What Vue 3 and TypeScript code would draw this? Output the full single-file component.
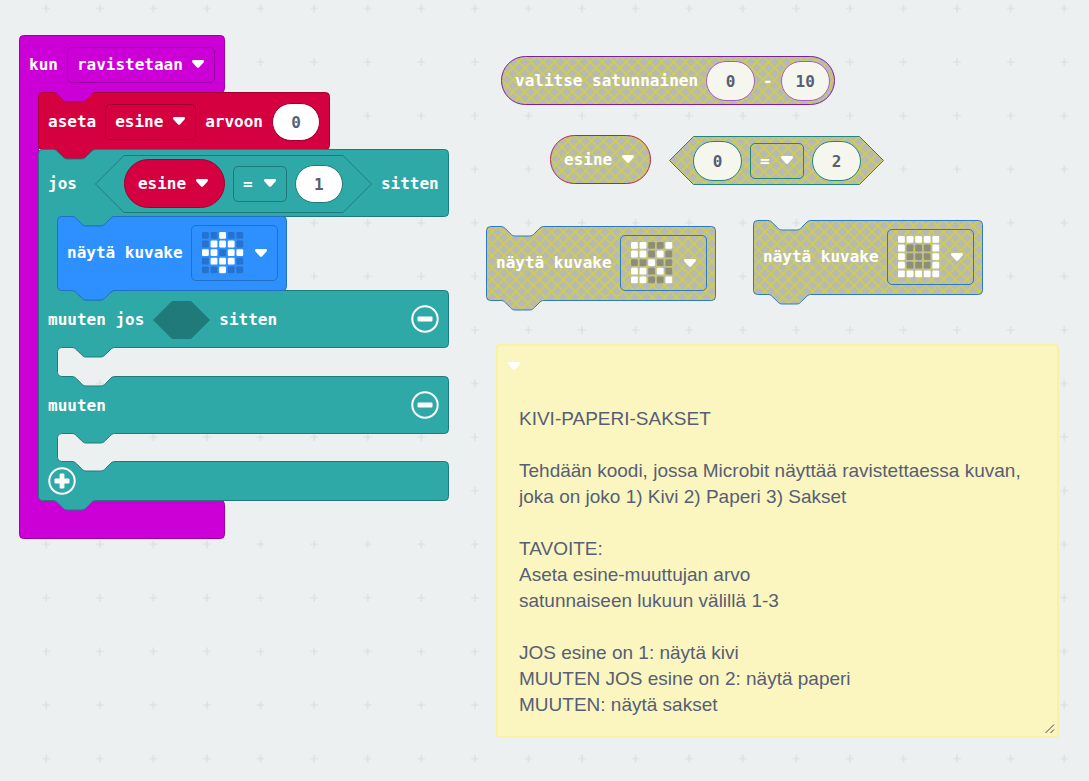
<script setup lang="ts">
import { ref } from 'vue'

const NOTCH = 'c2.4 0 3.6 1.2 4.8 2.4 l4.7 4.7 c1.2 1.2 2.4 2.4 4.8 2.4 h14.4 c2.4 0 3.6 -1.2 4.8 -2.4 l4.7 -4.7 c1.2 -1.2 2.4 -2.4 4.8 -2.4'
const NOTCH_BACK = 'c-2.4 0 -3.6 1.2 -4.8 2.4 l-4.7 4.7 c-1.2 1.2 -2.4 2.4 -4.8 2.4 h-14.4 c-2.4 0 -3.6 -1.2 -4.8 -2.4 l-4.7 -4.7 c-1.2 -1.2 -2.4 -2.4 -4.8 -2.4'
const INDENT = 19

// Right end of an arm, from the top edge down to the bottom edge at y
const armEnd = (right: number, bottom: number) =>
  `H${right - 3.5} a4 4 0 0 1 4 4 V${bottom - 3.5} a4 4 0 0 1 -4 4`

// Open mouth on the left side, between an upper and a lower arm
const mouth = (top: number, bottom: number) =>
  `H${INDENT + 57.9} ${NOTCH_BACK} H${INDENT + 4.5} a4 4 0 0 0 -4 4 V${bottom - 3.5} a4 4 0 0 0 4 4`

const statementPath = (w: number, h: number) =>
  `M.5 4.5 a4 4 0 0 1 4 -4 H14.9 ${NOTCH} ${armEnd(w, h)} H57.9 ${NOTCH_BACK} H4.5 a4 4 0 0 1 -4 -4 z`

const eventPath =
  `M.5 4.5 a4 4 0 0 1 4 -4 ${armEnd(205, 57)} ${mouth(57, 465)} ${armEnd(205, 503)} H4.5 a4 4 0 0 1 -4 -4 z`

const ifPath =
  `M.5 4.5 a4 4 0 0 1 4 -4 H14.9 ${NOTCH} ${armEnd(410, 67)} ${mouth(67, 141)} H33.9 ${NOTCH} ` +
  `${armEnd(410, 198)} ${mouth(198, 227)} H33.9 ${NOTCH} ` +
  `${armEnd(410, 284)} ${mouth(284, 312)} H33.9 ${NOTCH} ` +
  `${armEnd(410, 351)} H57.9 ${NOTCH_BACK} H4.5 a4 4 0 0 1 -4 -4 z`

const pillPath = (w: number, h: number) => {
  const r = h / 2
  return `M${r + 0.5} .5 H${w - r + 0.5} a${r} ${r} 0 0 1 0 ${h} H${r + 0.5} a${r} ${r} 0 0 1 0 ${-h} z`
}

const hexPath = (w: number, h: number) => {
  const r = h / 2
  return `M${r + 0.5} .5 H${w - r + 0.5} l${r} ${r} l${-r} ${r} H${r + 0.5} l${-r} ${-r} z`
}

const ARROW = 'M1.6 0 H10.4 C12 0 12.5 1.5 11.5 2.6 L7.2 7.2 C6.5 8 5.5 8 4.8 7.2 L.5 2.6 C-.5 1.5 0 0 1.6 0 z'

const leds = (rows: string[]) =>
  rows.flatMap((row, y) => [...row].map((c, x) => ({ x: x * 8.6, y: y * 8.6, on: c === '1' })))

const rock = leds(['00100', '01110', '11011', '01110', '00100'])

const spareIcons = [
  { id: 'scissors', name: 'sakset', cells: leds(['11001', '11010', '00100', '11010', '11001']) },
  { id: 'paper', name: 'paperi', cells: leds(['11111', '10001', '10001', '10001', '11111']) },
]

const gesture = ref('ravistetaan')
const variable = ref('esine')
const operator = ref('=')
const assigned = ref('0')
const compared = ref('1')
const randomFrom = ref('0')
const randomTo = ref('10')
const spareLeft = ref('0')
const spareRight = ref('2')

const note = ref(`KIVI-PAPERI-SAKSET

Tehdään koodi, jossa Microbit näyttää ravistettaessa kuvan, joka on joko 1) Kivi 2) Paperi 3) Sakset

TAVOITE:
Aseta esine-muuttujan arvo
satunnaiseen lukuun välillä 1-3

JOS esine on 1: näytä kivi
MUUTEN JOS esine on 2: näytä paperi
MUUTEN: näytä sakset`)
</script>

<template>
  <main class="workspace">
    <svg class="grid" aria-hidden="true">
      <defs>
        <pattern id="dots" x="19.4" y="-18.3" width="53.58" height="53.58" patternUnits="userSpaceOnUse">
          <path d="M22.8 26.8 h8 M26.8 22.8 v8" stroke="#dadddf" stroke-width="1.2" />
        </pattern>
        <pattern id="hatch" width="10" height="10" patternUnits="userSpaceOnUse" patternTransform="scale(1.19)">
          <rect width="10" height="10" fill="#aaa" />
          <path d="M-1 -1 L11 11 M11 -1 L-1 11" stroke="#cc0" stroke-width="1.2" />
        </pattern>
      </defs>
      <rect width="100%" height="100%" fill="url(#dots)" />
    </svg>

    <section class="block event">
      <svg class="shape" aria-hidden="true"><path :d="eventPath" /></svg>
      <div class="row">
        <span>kun</span>
        <span class="field">
          <select v-model="gesture" aria-label="ele"><option>ravistetaan</option></select>
          <svg class="arrow" viewBox="0 0 12 8" aria-hidden="true"><path :d="ARROW" /></svg>
        </span>
      </div>

      <div class="nested">
        <div class="block set">
          <svg class="shape" aria-hidden="true"><path :d="statementPath(291, 57)" /></svg>
          <div class="row">
            <span>aseta</span>
            <span class="field">
              <select v-model="variable" aria-label="muuttuja"><option>esine</option></select>
              <svg class="arrow" viewBox="0 0 12 8" aria-hidden="true"><path :d="ARROW" /></svg>
            </span>
            <span>arvoon</span>
            <input v-model="assigned" class="number" inputmode="numeric" aria-label="arvo" />
          </div>
        </div>

        <div class="block logic">
          <svg class="shape" aria-hidden="true"><path :d="ifPath" /></svg>
          <div class="row condition">
            <span class="keyword">jos</span>
            <div class="block compare">
              <svg class="shape" aria-hidden="true"><path :d="hexPath(276, 57)" /></svg>
              <div class="block variable">
                <svg class="shape" aria-hidden="true"><path :d="pillPath(100, 48)" /></svg>
                <span class="field bare">
                  <select v-model="variable" aria-label="vertailtava muuttuja"><option>esine</option></select>
                  <svg class="arrow" viewBox="0 0 12 8" aria-hidden="true"><path :d="ARROW" /></svg>
                </span>
              </div>
              <span class="field">
                <select v-model="operator" aria-label="vertailu"><option>=</option></select>
                <svg class="arrow" viewBox="0 0 12 8" aria-hidden="true"><path :d="ARROW" /></svg>
              </span>
              <input v-model="compared" class="number" inputmode="numeric" aria-label="vertailuarvo" />
            </div>
            <span>sitten</span>
          </div>

          <div class="nested">
            <div class="block show">
              <svg class="shape" aria-hidden="true"><path :d="statementPath(229, 74)" /></svg>
              <div class="row">
                <span>näytä kuvake</span>
                <button class="picker" type="button" aria-haspopup="listbox" aria-label="kuvake: kivi">
                  <svg class="leds" viewBox="0 0 42 42" aria-hidden="true">
                    <rect v-for="(c, i) in rock" :key="i" :x="c.x" :y="c.y" width="6.8" height="6.8" rx="1.2" :class="{ on: c.on }" />
                  </svg>
                  <svg class="arrow" viewBox="0 0 12 8" aria-hidden="true"><path :d="ARROW" /></svg>
                </button>
              </div>
            </div>
          </div>

          <div class="row">
            <span>muuten jos</span>
            <svg class="slot" viewBox="0 0 57 38" aria-hidden="true"><path d="M19 0 H38 L57 19 L38 38 H19 L0 19 z" /></svg>
            <span>sitten</span>
            <button class="round push" type="button" aria-label="poista muuten jos">
              <svg viewBox="0 0 28 28" aria-hidden="true"><circle cx="14" cy="14" r="12.7" /><rect x="6.5" y="11.6" width="15" height="4.8" rx="1" /></svg>
            </button>
          </div>
          <div class="gap first"></div>
          <div class="row">
            <span>muuten</span>
            <button class="round push" type="button" aria-label="poista muuten">
              <svg viewBox="0 0 28 28" aria-hidden="true"><circle cx="14" cy="14" r="12.7" /><rect x="6.5" y="11.6" width="15" height="4.8" rx="1" /></svg>
            </button>
          </div>
          <div class="gap"></div>
          <div class="row foot">
            <button class="round" type="button" aria-label="lisää muuten jos">
              <svg viewBox="0 0 28 28" aria-hidden="true"><circle cx="14" cy="14" r="12.7" /><rect x="6.5" y="11.6" width="15" height="4.8" rx="1" /><rect x="11.6" y="6.5" width="4.8" height="15" rx="1" /></svg>
            </button>
          </div>
        </div>
      </div>
    </section>

    <section class="block spare random">
      <svg class="shape" aria-hidden="true"><path :d="pillPath(333, 48)" /></svg>
      <span class="keyword">valitse satunnainen</span>
      <input v-model="randomFrom" class="number" inputmode="numeric" aria-label="pienin" />
      <span>-</span>
      <input v-model="randomTo" class="number" inputmode="numeric" aria-label="suurin" />
    </section>

    <section class="block spare loose">
      <svg class="shape" aria-hidden="true"><path :d="pillPath(100, 48)" /></svg>
      <span class="field bare">
        <select v-model="variable" aria-label="irrallinen muuttuja"><option>esine</option></select>
        <svg class="arrow" viewBox="0 0 12 8" aria-hidden="true"><path :d="ARROW" /></svg>
      </span>
    </section>

    <section class="block spare equals">
      <svg class="shape" aria-hidden="true"><path :d="hexPath(214, 48)" /></svg>
      <input v-model="spareLeft" class="number" inputmode="numeric" aria-label="vasen arvo" />
      <span class="field">
        <select v-model="operator" aria-label="irrallinen vertailu"><option>=</option></select>
        <svg class="arrow" viewBox="0 0 12 8" aria-hidden="true"><path :d="ARROW" /></svg>
      </span>
      <input v-model="spareRight" class="number" inputmode="numeric" aria-label="oikea arvo" />
    </section>

    <section v-for="icon in spareIcons" :key="icon.id" class="block spare show" :class="icon.id">
      <svg class="shape" aria-hidden="true"><path :d="statementPath(229, 74)" /></svg>
      <div class="row">
        <span>näytä kuvake</span>
        <button class="picker" type="button" aria-haspopup="listbox" :aria-label="'kuvake: ' + icon.name">
          <svg class="leds" viewBox="0 0 42 42" aria-hidden="true">
            <rect v-for="(c, i) in icon.cells" :key="i" :x="c.x" :y="c.y" width="6.8" height="6.8" rx="1.2" :class="{ on: c.on }" />
          </svg>
          <svg class="arrow" viewBox="0 0 12 8" aria-hidden="true"><path :d="ARROW" /></svg>
        </button>
      </div>
    </section>

    <section class="note">
      <button class="fold" type="button" aria-label="pienennä kommentti">
        <svg class="arrow" viewBox="0 0 12 8" aria-hidden="true"><path :d="ARROW" /></svg>
      </button>
      <textarea v-model="note" rows="12" spellcheck="false" aria-label="kommentti"></textarea>
      <svg class="grip" viewBox="0 0 10 10" aria-hidden="true"><path d="M.5 9 L9 .5 M5.5 9 L9 5.5" /></svg>
    </section>
  </main>
</template>

<style>
body {
  margin: 0;
  background: #ecf0f1;
}
</style>

<style scoped>
.workspace {
  position: relative;
  min-height: 100vh;
  overflow: hidden;
  color: #fff;
  font: bold 16px/20px "DejaVu Sans Mono", "Liberation Mono", monospace;
}

.grid {
  position: absolute;
  inset: 0;
  width: 100%;
  height: 100%;
}

.block {
  position: relative;
  box-sizing: border-box;
  white-space: nowrap;
}

.shape {
  position: absolute;
  inset: 0;
  width: 100%;
  height: 100%;
  overflow: visible;
  fill: var(--fill);
  stroke: var(--line);
}

.row {
  position: relative;
  display: flex;
  align-items: center;
  gap: 9px;
  height: 57px;
  padding: 2px 10px 0;
  box-sizing: border-box;
}

.nested {
  margin-left: 19px;
}

.event {
  --fill: #cc00d6;
  --line: #9c00a4;
  position: absolute;
  left: 19px;
  top: 35px;
  width: 206px;
  height: 504px;
}

.set {
  --fill: #d4003f;
  --line: #a0002f;
  width: 292px;
}

.logic {
  --fill: #2fa8a8;
  --line: #217a7a;
  width: 411px;
}

.condition {
  height: 67px;
}

.condition > .keyword {
  margin-right: 9px;
}

.compare {
  display: flex;
  align-items: center;
  gap: 8px;
  width: 277px;
  height: 58px;
  padding-left: 29px;
}

.variable {
  --fill: #d4003f;
  --line: #a0002f;
  width: 101px;
  height: 49px;
  display: flex;
  align-items: center;
}

.show {
  --fill: #2e90ff;
  --line: #2271c7;
  width: 230px;
}

.show .row {
  height: 74px;
  gap: 8px;
  padding-top: 0;
}

.gap {
  height: 28px;
}

.gap.first {
  height: 29px;
}

.row.foot {
  height: 39px;
  padding-top: 0;
}

.slot {
  width: 57px;
  height: 38px;
  fill: #217a7a;
}

.field {
  position: relative;
  display: grid;
  align-items: center;
  min-width: 54px;
  height: 36px;
  box-sizing: border-box;
  border: 1px solid var(--line);
  border-radius: 5px;
}

.field.bare {
  border-color: transparent;
  margin-left: 4px;
}

.field > * {
  grid-area: 1 / 1;
}

select {
  appearance: none;
  height: 34px;
  margin: 0;
  padding: 0 31px 0 9px;
  border: 0;
  background: transparent;
  color: inherit;
  font: inherit;
}

.arrow {
  width: 12px;
  height: 8px;
  fill: #fff;
  pointer-events: none;
}

.field > .arrow {
  justify-self: end;
  margin: 0 10px 2px 0;
}

.number {
  position: relative;
  width: 48px;
  height: 38px;
  box-sizing: border-box;
  padding: 2px 0 0;
  border: 1px solid var(--line);
  border-radius: 19px;
  background: #fff;
  color: #575e75;
  font: inherit;
  text-align: center;
}

.picker {
  display: flex;
  align-items: center;
  gap: 11px;
  height: 56px;
  box-sizing: border-box;
  padding: 0 10px;
  border: 1px solid var(--line);
  border-radius: 5px;
  background: none;
}

.leds {
  width: 42px;
  height: 42px;
  fill: var(--off, #2573cf);
}

.leds .on {
  fill: #fff;
}

.round {
  display: flex;
  padding: 0;
  border: 0;
  background: none;
}

.round.push {
  margin: 0 0 2px auto;
}

.round svg {
  width: 28px;
  height: 28px;
  fill: #fff;
}

.round circle {
  fill: none;
  stroke: #fff;
  stroke-width: 2;
}

.spare {
  --fill: url(#hatch);
  --off: rgba(125, 125, 110, 0.75);
  position: absolute;
}

.spare > .shape {
  fill-opacity: 0.8;
}

.spare .number {
  height: 40px;
  width: 49px;
  border-radius: 20px;
  background: rgba(255, 255, 255, 0.85);
}

.spare > span,
.spare > input {
  position: relative;
}

.random {
  --line: #7b1fa8;
  left: 501px;
  top: 56px;
  width: 334px;
  height: 49px;
  display: flex;
  align-items: center;
  gap: 8px;
  padding: 0 4px 0 14px;
}

.random .number {
  border-color: #a45fc4;
}

.loose {
  --line: #b0294d;
  left: 550px;
  top: 135px;
  width: 101px;
  height: 49px;
  display: flex;
  align-items: center;
}

.equals {
  --line: #23857f;
  left: 669px;
  top: 136px;
  width: 215px;
  height: 49px;
  display: flex;
  align-items: center;
  gap: 8px;
  padding-left: 24px;
}

.scissors {
  --line: #2f78c4;
  left: 486px;
  top: 226px;
}

.paper {
  --line: #2f78c4;
  left: 753px;
  top: 220px;
}

.note {
  position: absolute;
  left: 496px;
  top: 344px;
  width: 563px;
  box-sizing: border-box;
  padding: 13px 20px 18px 21px;
  border: 2px solid #f9f1a5;
  border-radius: 4px;
  background: #fbf6bf;
  display: flex;
  flex-direction: column;
}

.fold {
  display: flex;
  align-self: flex-start;
  margin: 0 0 33px -11px;
  padding: 3px 0;
  border: 0;
  background: none;
}

textarea {
  display: block;
  width: 100%;
  box-sizing: border-box;
  padding: 0;
  border: 0;
  outline: 0;
  resize: none;
  overflow: hidden;
  background: none;
  color: #575e75;
  font: 19px/26px "Liberation Sans", Arial, sans-serif;
}

.grip {
  position: absolute;
  right: 2px;
  bottom: 2px;
  width: 10px;
  height: 10px;
  fill: none;
  stroke: #444;
}
</style>
